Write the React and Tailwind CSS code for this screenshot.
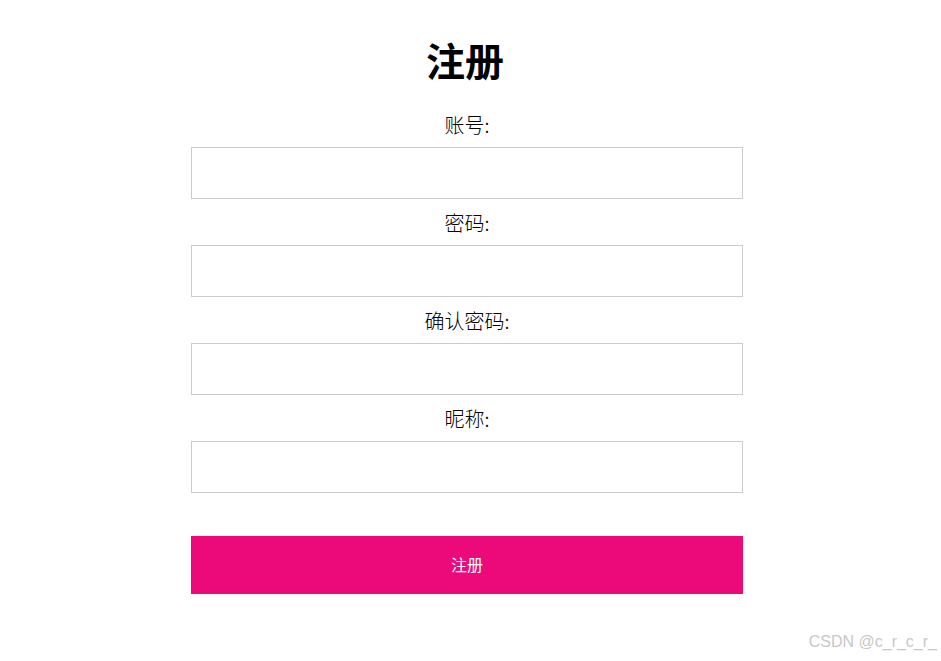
// Register form page
const fields = ["账号:", "密码:", "确认密码:", "昵称:"];

export default function App() {
  return (
    <div className="relative w-[941px] h-[661px] bg-white font-['Microsoft_YaHei','Noto_Sans_CJK_SC',sans-serif] text-black">
      <div className="ml-[191px] w-[552px] pt-[39px] flex flex-col">
        <h1 className="text-center text-[39px] leading-[40px] font-bold pr-[4px]">注册</h1>

        <div className="mt-[34px] flex flex-col gap-[12px]">
          {fields.map((label) => (
            <div key={label} className="flex flex-col gap-[10px]">
              <label className="text-center text-[20px] leading-[24px] font-light">{label}</label>
              <input
                type="text"
                className="h-[52px] w-full border border-[#cccccc] outline-none px-3"
              />
            </div>
          ))}
        </div>

        <button className="mt-[43px] h-[58px] w-full bg-[#ec0a7a] text-white text-[16px] leading-[16px] pb-[2px]">
          注册
        </button>
      </div>

      <div className="absolute right-[4px] bottom-[7px] text-[16px] text-[#c8c8c8] font-['Liberation_Sans',sans-serif]">
        CSDN @c_r_c_r_
      </div>
    </div>
  );
}
